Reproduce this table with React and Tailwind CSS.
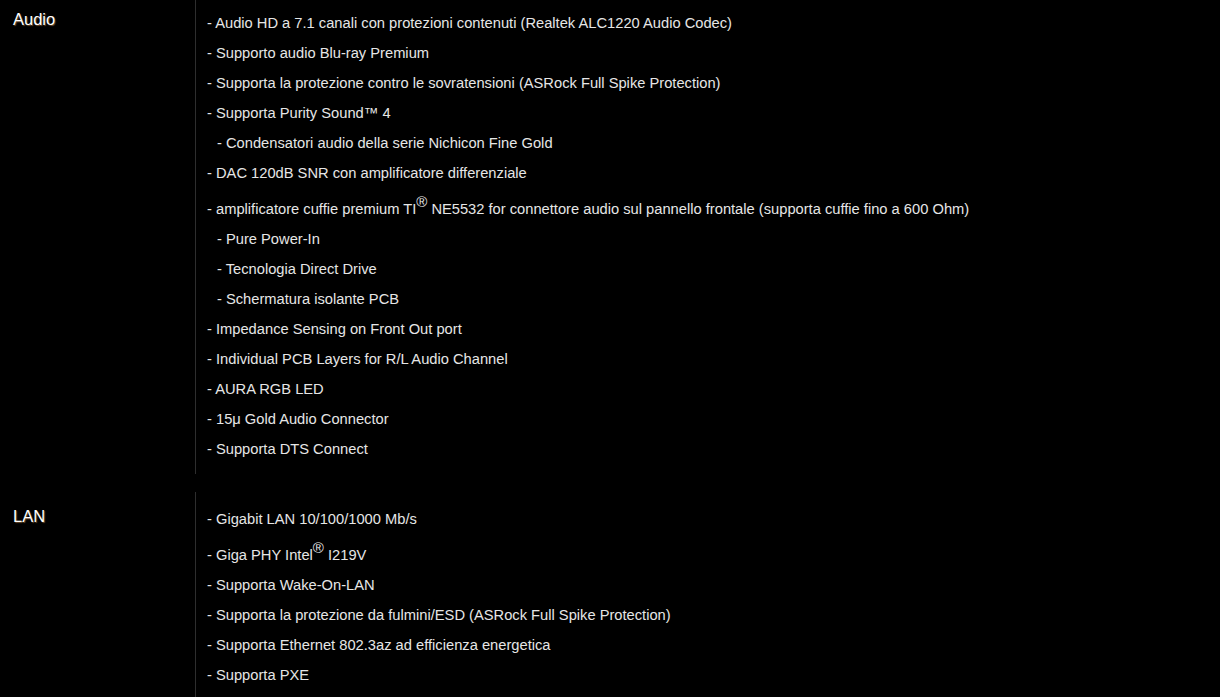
const audio = [
  '- Audio HD a 7.1 canali con protezioni contenuti (Realtek ALC1220 Audio Codec)',
  '- Supporto audio Blu-ray Premium',
  '- Supporta la protezione contro le sovratensioni (ASRock Full Spike Protection)',
  '- Supporta Purity Sound™ 4',
  { sub: '- Condensatori audio della serie Nichicon Fine Gold' },
  '- DAC 120dB SNR con amplificatore differenziale',
  { pre: '- amplificatore cuffie premium TI', post: ' NE5532 for connettore audio sul pannello frontale (supporta cuffie fino a 600 Ohm)' },
  { sub: '- Pure Power-In' },
  { sub: '- Tecnologia Direct Drive' },
  { sub: '- Schermatura isolante PCB' },
  '- Impedance Sensing on Front Out port',
  '- Individual PCB Layers for R/L Audio Channel',
  '- AURA RGB LED',
  '- 15μ Gold Audio Connector',
  '- Supporta DTS Connect',
];

const lan = [
  '- Gigabit LAN 10/100/1000 Mb/s',
  { pre: '- Giga PHY Intel', post: ' I219V' },
  '- Supporta Wake-On-LAN',
  '- Supporta la protezione da fulmini/ESD (ASRock Full Spike Protection)',
  '- Supporta Ethernet 802.3az ad efficienza energetica',
  '- Supporta PXE',
];

function Item({ item }) {
  if (typeof item === 'string') {
    return <div className="leading-[30px] whitespace-pre">{item}</div>;
  }
  if (item.sub) {
    return <div className="leading-[30px] pl-[10px] whitespace-pre">{item.sub}</div>;
  }
  return (
    <div className="leading-[30px] pt-[6px] whitespace-pre">
      {item.pre}
      <span className="relative -top-[7px] text-[15px]">®</span>
      {item.post}
    </div>
  );
}

function Row({ label, items, labelClass, listClass }) {
  return (
    <div className="flex">
      <div className={`w-[195px] shrink-0 pl-[13px] text-[16.5px] text-white [text-shadow:1px_1px_1px_#6b4a2a] ${labelClass}`}>
        {label}
      </div>
      <div className={`flex-1 border-l border-[#2e2e2e] pl-[11px] text-[14.7px] text-[#e6e6e6] ${listClass}`}>
        {items.map((it, i) => (
          <Item key={i} item={it} />
        ))}
      </div>
    </div>
  );
}

export default function App() {
  return (
    <div className="min-h-screen w-full bg-black font-['Liberation_Sans',Arial,sans-serif]">
      <Row label="Audio" items={audio} labelClass="pt-[7px]" listClass="pt-[8px] pb-[10px]" />
      <div className="h-[18px]" />
      <Row label="LAN" items={lan} labelClass="pt-[12px]" listClass="pt-[12px] pb-[10px]" />
    </div>
  );
}
